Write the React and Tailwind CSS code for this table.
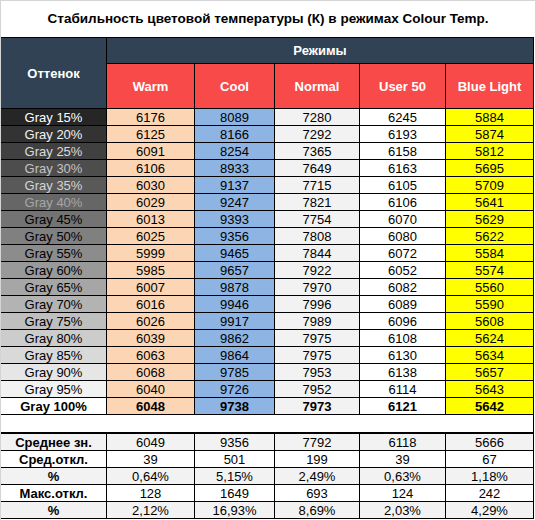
const rows = [
  ['Gray 15%', 'bg-[#262626] text-white', 6176, 8089, 7280, 6245, 5884],
  ['Gray 20%', 'bg-[#333333] text-[#f2f2f2]', 6125, 8166, 7292, 6193, 5874],
  ['Gray 25%', 'bg-[#404040] text-[#dcdcdc]', 6091, 8254, 7365, 6158, 5812],
  ['Gray 30%', 'bg-[#4d4d4d] text-[#c4c4c4]', 6106, 8933, 7649, 6163, 5695],
  ['Gray 35%', 'bg-[#595959] text-[#d4d4d4]', 6030, 9137, 7715, 6105, 5709],
  ['Gray 40%', 'bg-[#666666] text-[#a6a6a6]', 6029, 9247, 7821, 6106, 5641],
  ['Gray 45%', 'bg-[#737373] text-black', 6013, 9393, 7754, 6070, 5629],
  ['Gray 50%', 'bg-[#808080] text-black', 6025, 9356, 7808, 6080, 5622],
  ['Gray 55%', 'bg-[#8c8c8c] text-black', 5999, 9465, 7844, 6072, 5584],
  ['Gray 60%', 'bg-[#999999] text-black', 5985, 9657, 7922, 6052, 5574],
  ['Gray 65%', 'bg-[#a6a6a6] text-black', 6007, 9878, 7970, 6082, 5560],
  ['Gray 70%', 'bg-[#b3b3b3] text-black', 6016, 9946, 7996, 6089, 5590],
  ['Gray 75%', 'bg-[#bfbfbf] text-black', 6026, 9917, 7989, 6096, 5608],
  ['Gray 80%', 'bg-[#cccccc] text-black', 6039, 9862, 7975, 6108, 5624],
  ['Gray 85%', 'bg-[#d9d9d9] text-black', 6063, 9864, 7975, 6130, 5634],
  ['Gray 90%', 'bg-[#e6e6e6] text-black', 6068, 9785, 7953, 6138, 5657],
  ['Gray 95%', 'bg-[#f2f2f2] text-black', 6040, 9726, 7952, 6114, 5643],
  ['Gray 100%', 'bg-white text-black font-bold', 6048, 9738, 7973, 6121, 5642],
];

const stats = [
  ['Среднее зн.', 'bg-[#f2f2f2]', 6049, 9356, 7792, 6118, 5666],
  ['Сред.откл.', 'bg-white', 39, 501, 199, 39, 67],
  ['%', 'bg-[#f2f2f2]', '0,64%', '5,15%', '2,49%', '0,63%', '1,18%'],
  ['Макс.откл.', 'bg-white', 128, 1649, 693, 124, 242],
  ['%', 'bg-[#f2f2f2]', '2,12%', '16,93%', '8,69%', '2,03%', '4,29%'],
];

const modes = ['Warm', 'Cool', 'Normal', 'User 50', 'Blue Light'];
const colBg = ['bg-[#fcd5b4]', 'bg-[#8db4e2]', 'bg-[#f2f2f2]', 'bg-white', 'bg-[#ffff00]'];

const cell = 'flex items-center justify-center leading-none';

function App() {
  return (
    <div className="w-[535px] h-[520px] overflow-hidden bg-white border-t border-l border-[#d4d4d4] font-['Liberation_Sans',Arial,sans-serif] text-[13px] text-black">
      <div className="h-[36px] pt-px flex items-center justify-center font-bold text-[13.5px]">
        Стабильность цветовой температуры (К) в режимах Colour Temp.
      </div>

      <div className="w-[533px] grid grid-cols-[105px_87px_79px_84px_85px_87px] grid-rows-[25px_44px_repeat(18,16px)_18px_repeat(5,16px)] gap-px bg-black border-t border-r border-b border-black">
        <div className={`${cell} row-span-2 bg-[#304254] text-white font-bold`}>Оттенок</div>
        <div className={`${cell} col-span-5 bg-[#304254] text-white font-bold`}>Режимы</div>
        {modes.map((m) => (
          <div key={m} className={`${cell} bg-[#f94a4a] text-white font-bold`}>
            {m}
          </div>
        ))}

        {rows.map(([label, labelCls, ...vals]) => (
          <div key={label} className="contents">
            <div className={`${cell} ${labelCls}`}>{label}</div>
            {vals.map((v, i) => (
              <div
                key={i}
                className={`${cell} ${colBg[i]} ${label === 'Gray 100%' ? 'font-bold' : ''}`}
              >
                {v}
              </div>
            ))}
          </div>
        ))}

        {/* empty separator row */}
        <div className="col-span-6 bg-white border-b border-black" />

        {stats.map(([label, bg, ...vals], r) => (
          <div key={r} className="contents">
            <div className={`${cell} ${bg} font-bold`}>{label}</div>
            {vals.map((v, i) => (
              <div key={i} className={`${cell} ${bg}`}>
                {v}
              </div>
            ))}
          </div>
        ))}
      </div>
    </div>
  );
}

export default App;
